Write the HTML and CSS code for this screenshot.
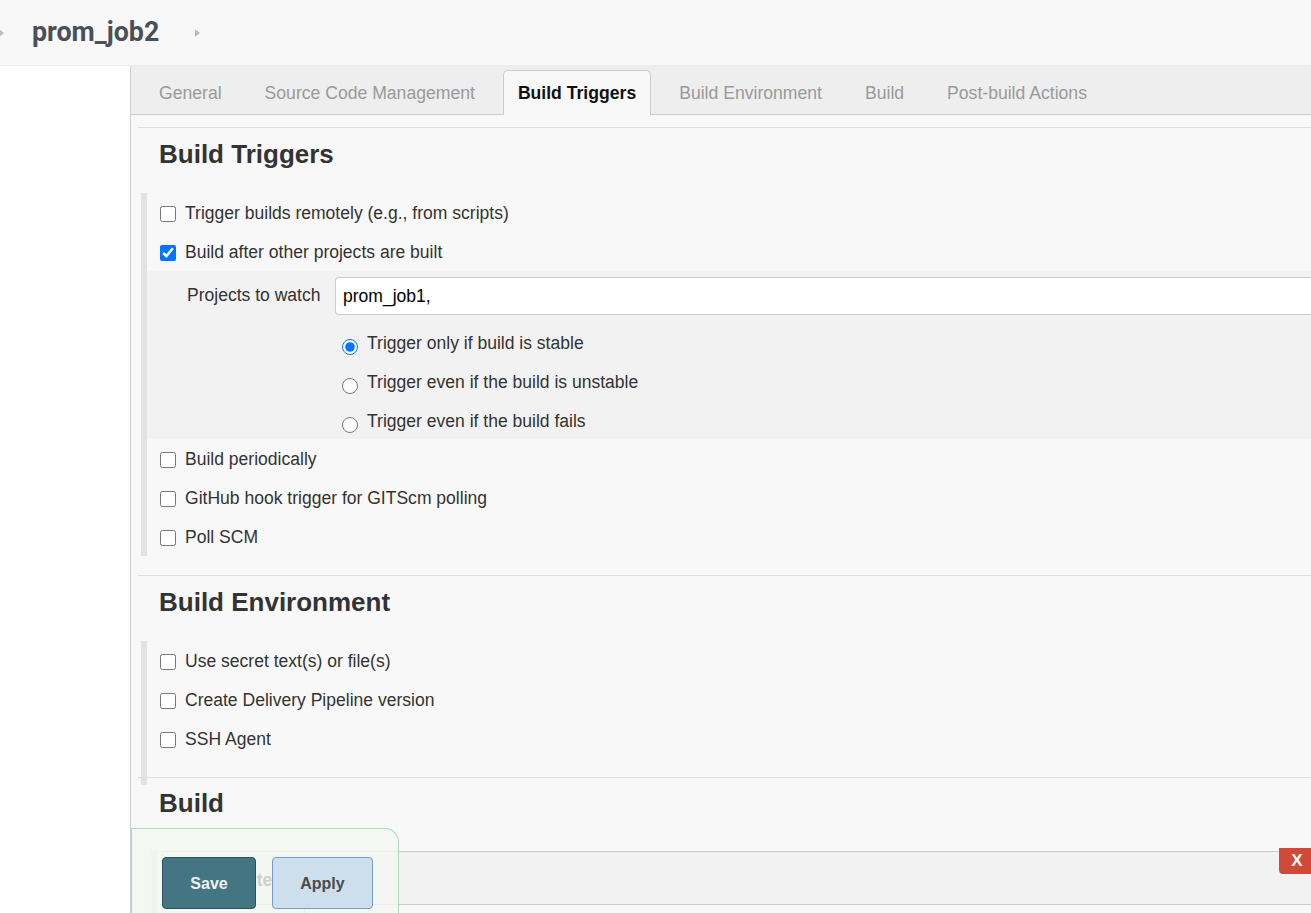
FILE: index.html
```html
<!DOCTYPE html>
<html lang="en">
<head>
<meta charset="utf-8">
<title>prom_job2 Config</title>
<link rel="stylesheet" href="styles.css">
</head>
<body>
<header class="topbar">
  <span class="crumb-arrow first"></span>
  <span class="crumb">prom_job2</span>
  <span class="crumb-arrow second"></span>
</header>
<div class="layout">
  <aside class="sidebar"></aside>
  <main class="content">
    <nav class="tabs">
      <span class="tab">General</span>
      <span class="tab">Source Code Management</span>
      <span class="tab active">Build Triggers</span>
      <span class="tab">Build Environment</span>
      <span class="tab">Build</span>
      <span class="tab">Post-build Actions</span>
    </nav>
    <div class="panel">
      <section class="section first">
        <h2 class="section-title">Build Triggers</h2>
        <div class="section-body">
          <label class="row"><input type="checkbox" class="check"><span>Trigger builds remotely (e.g., from scripts)</span></label>
          <label class="row"><input type="checkbox" class="check" checked><span>Build after other projects are built</span></label>
          <div class="nested">
            <div class="watch-row">
              <span class="watch-label">Projects to watch</span>
              <input type="text" class="watch-input" value="prom_job1,">
            </div>
            <label class="radio-row"><input type="radio" name="trig" class="radio" checked><span>Trigger only if build is stable</span></label>
            <label class="radio-row"><input type="radio" name="trig" class="radio"><span>Trigger even if the build is unstable</span></label>
            <label class="radio-row last"><input type="radio" name="trig" class="radio"><span>Trigger even if the build fails</span></label>
          </div>
          <label class="row"><input type="checkbox" class="check"><span>Build periodically</span></label>
          <label class="row"><input type="checkbox" class="check"><span>GitHub hook trigger for GITScm polling</span></label>
          <label class="row"><input type="checkbox" class="check"><span>Poll SCM</span></label>
        </div>
      </section>
      <section class="section">
        <h2 class="section-title">Build Environment</h2>
        <div class="section-body tall">
          <label class="row"><input type="checkbox" class="check"><span>Use secret text(s) or file(s)</span></label>
          <label class="row"><input type="checkbox" class="check"><span>Create Delivery Pipeline version</span></label>
          <label class="row"><input type="checkbox" class="check"><span>SSH Agent</span></label>
        </div>
      </section>
      <section class="section overlap">
        <h2 class="section-title">Build</h2>
        <div class="step">
          <div class="step-box">
            <div class="step-head">
              <span class="step-title">Execute shell</span>
              <button class="delete-btn" type="button">X</button>
            </div>
            <div class="step-body">
              <div class="step-field"></div>
            </div>
          </div>
        </div>
      </section>
    </div>
  </main>
</div>
<div class="bottom-bar">
  <button class="btn save" type="button">Save</button>
  <button class="btn apply" type="button">Apply</button>
</div>
</body>
</html>
```

FILE: styles.css
```css
html, body {
  margin: 0;
  padding: 0;
  height: 100%;
  overflow: hidden;
}
body {
  background: #ffffff;
  font-family: "Liberation Sans", Arial, sans-serif;
  font-size: 17.55px;
  color: #333333;
}

/* top breadcrumb bar */
.topbar {
  height: 65px;
  background: #f8f8f8;
  border-bottom: 1px solid #ececec;
  display: flex;
  align-items: center;
  box-sizing: content-box;
}
.crumb-arrow {
  width: 0;
  height: 0;
  border-top: 4px solid transparent;
  border-bottom: 4px solid transparent;
  border-left: 5px solid #bdbdbd;
}
.crumb-arrow.first {
  margin-left: -1px;
}
.crumb {
  margin-left: 28px;
  font-family: Roboto, "Liberation Sans", sans-serif;
  font-weight: 700;
  font-size: 26.8px;
  color: #4b5058;
  line-height: 30px;
  margin-top: -2px;
}
.crumb-arrow.second {
  margin-left: 36px;
}

.layout {
  display: flex;
  height: calc(100% - 66px);
}
.sidebar {
  width: 130px;
  flex: none;
  background: #ffffff;
}
.content {
  flex: 1;
  border-left: 1px solid #d0d0d0;
  background: #f8f8f8;
  min-width: 0;
}

/* tabs */
.tabs {
  height: 48px;
  background: #eeeeee;
  border-bottom: 1px solid #cccccc;
  display: flex;
  align-items: flex-end;
  padding-left: 13px;
  gap: 13px;
}
.tab {
  padding: 0 14px;
  border: 1px solid transparent;
  border-bottom: 0;
  color: #9a9a9a;
  white-space: nowrap;
  margin-bottom: -1px;
  height: 45px;
  box-sizing: border-box;
  line-height: 44px;
  font-size: 17.6px;
}
.tab.active {
  background: #f8f8f8;
  border-color: #cccccc;
  border-radius: 5px 5px 0 0;
  color: #111111;
  font-weight: 700;
}

/* sections */
.panel {
  padding-top: 12px;
}
.section {
  margin-left: 7px;
  border-top: 1px solid #dddddd;
  margin-bottom: 20px;
}
.section.first {
  margin-bottom: 19px;
}
.section.overlap {
  margin-top: -28px;
  position: relative;
}
.section-title {
  margin: 0 0 24px 0;
  padding: 11px 0 0 21px;
  font-size: 26px;
  line-height: 30px;
  font-weight: 700;
  color: #333333;
}
.section-body {
  margin-left: 3px;
  border-left: 6px solid #e2e2e2;
}
.section-body.tall {
  padding-bottom: 27px;
}
.row {
  height: 39px;
  box-sizing: border-box;
  padding-top: 2px;
  display: flex;
  align-items: center;
  padding-left: 13px;
}
.check {
  width: 16px;
  height: 16px;
  margin: 0 9px 0 0;
}

/* nested block */
.nested {
  background: #f2f2f2;
  padding-top: 6px;
}
.watch-row {
  display: flex;
  align-items: center;
}
.watch-label {
  width: 148px;
  padding-left: 40px;
  flex: none;
  margin-top: -1px;
}
.watch-input {
  flex: 1;
  height: 38px;
  box-sizing: border-box;
  border: 1px solid #cccccc;
  border-right: 0;
  border-radius: 4px 0 0 4px;
  background: #ffffff;
  padding: 0 7px;
  font-family: "Liberation Sans", Arial, sans-serif;
  font-size: 17.55px;
  color: #000000;
  outline: none;
}
.radio-row {
  height: 39px;
  box-sizing: border-box;
  padding-top: 2px;
  display: flex;
  align-items: center;
  padding-left: 195px;
}
.watch-row + .radio-row {
  margin-top: 8px;
}
.radio-row.last {
  height: 38px;
  align-items: flex-start;
  padding-top: 9px;
}
.radio-row.last .radio {
  margin-top: 7px;
}
.radio-row.last span {
  line-height: 24px;
  margin-top: -1px;
}
.radio {
  width: 16px;
  height: 16px;
  margin: 7px 9px 0 0;
}

/* build step */
.section.overlap .section-title {
  padding-top: 10px;
  margin-bottom: 33px;
}
.step {
  margin-left: 13px;
  border-left: 6px solid #e6e6e6;
  padding-left: 5px;
}
.step-box {
  border-left: 1px solid #cccccc;
  border-top: 1px solid #cccccc;
  position: relative;
}
.step-head {
  height: 52px;
  background: #f2f2f2;
  border-bottom: 1px solid #cccccc;
  display: flex;
  align-items: center;
  padding-left: 42px;
}
.step-title {
  font-weight: 700;
  color: #333333;
  margin-top: 4px;
}
.delete-btn {
  position: absolute;
  top: -4px;
  right: 0;
  width: 32px;
  height: 26px;
  border: 0;
  border-radius: 0 0 0 4px;
  background: #d24939;
  color: #ffffff;
  font-family: "Liberation Sans", Arial, sans-serif;
  font-weight: 700;
  font-size: 17px;
  padding: 0 0 0 4px;
}
.step-body {
  height: 60px;
  padding-left: 0;
}
.step-field {
  width: 141px;
  height: 60px;
  border-right: 1px solid #cccccc;
}

/* sticky bottom bar */
.bottom-bar {
  position: fixed;
  left: 131px;
  top: 828px;
  width: 268px;
  height: 100px;
  background: rgba(244, 248, 240, 0.8);
  border: 1px solid #b3d6c0;
  border-bottom: 0;
  border-top-right-radius: 14px;
  padding: 28px 0 0 30px;
  box-sizing: border-box;
  display: flex;
  align-items: flex-start;
}
.btn {
  height: 52px;
  box-sizing: border-box;
  border-radius: 4px;
  font-family: "Liberation Sans", Arial, sans-serif;
  font-weight: 700;
  font-size: 16px;
  padding: 2px 0 0 0;
}
.btn.save {
  width: 94px;
  background: #437583;
  border: 1px solid #2d5360;
  color: #eef2f4;
}
.btn.apply {
  width: 101px;
  margin-left: 16px;
  background: #cddeed;
  border: 1px solid #6d9fd2;
  color: #4b4b4b;
}
```
